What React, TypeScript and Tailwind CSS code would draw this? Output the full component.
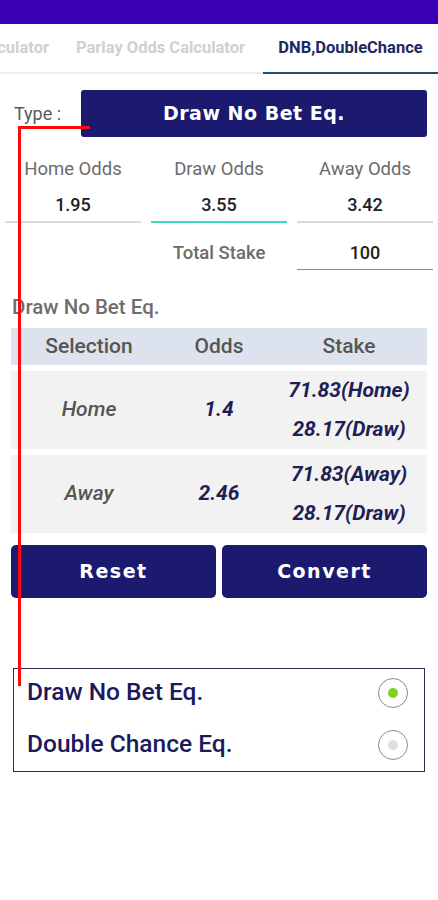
import React, { useState } from 'react';

const navy = 'bg-[#1b1a6e]';
const wide = { fontFamily: '"DejaVu Sans", Roboto, sans-serif' };

const OddsInput = ({ label, value, active = false }: { label: string; value: string; active?: boolean }) => (
  <div className="flex flex-col items-center w-[136px]">
    <span className="text-[18.5px] text-[#6b6b6b] leading-none mt-[1px]">{label}</span>
    <span className="text-[18px] font-medium text-[#222] leading-none mt-[17px]">{value}</span>
    <div className={`w-full mt-[7px] ${active ? 'h-[2px] bg-[#3dd6c0]' : 'h-[2px] bg-[#d9d9d9]'}`} />
  </div>
);

const Radio = ({ checked }: { checked: boolean }) => (
  <div className="w-[30px] h-[30px] rounded-full border-[1.5px] border-[#8a8a8a] flex items-center justify-center">
    <div className={`w-[10px] h-[10px] rounded-full ${checked ? 'bg-[#7ed321]' : 'bg-[#dedede]'}`} />
  </div>
);

export default function App() {
  const [mode, setMode] = useState<'dnb' | 'dc'>('dnb');

  const rows = [
    { sel: 'Home', odds: '1.4', a: '71.83(Home)', b: '28.17(Draw)' },
    { sel: 'Away', odds: '2.46', a: '71.83(Away)', b: '28.17(Draw)' },
  ];

  return (
    <div className="relative w-[438px] h-[900px] bg-white overflow-hidden" style={{ fontFamily: 'Roboto, "Noto Sans", sans-serif' }}>
      {/* status bar */}
      <div className="h-[24px] bg-[#3a00b5]" />

      {/* tabs, first one scrolled partly out of view */}
      <div className="h-[50px] flex items-stretch border-b-[2px] border-[#ececec] text-[16.5px] font-bold whitespace-nowrap">
        <div className="w-[58px] overflow-hidden flex items-center justify-end pr-[9px] text-[#d0d0d0]">
          <span>culator</span>
        </div>
        <div className="w-[205px] flex items-center justify-center text-[#d0d0d0]">Parlay Odds Calculator</div>
        <div className="flex-1 flex items-center justify-center text-[#1b2a5e] border-b-[2px] border-[#1f4f73] mb-[-2px]">
          DNB,DoubleChance
        </div>
      </div>

      {/* type row */}
      <div className="flex items-center mt-[16px] px-[11px]">
        <span className="w-[70px] pl-[3px] text-[18px] text-[#5a5a5a]">Type :</span>
        <div className={`flex-1 h-[47px] ${navy} rounded-[3px] flex items-center justify-center text-white text-[19px] font-bold tracking-[0.5px]`} style={wide}>
          Draw No Bet Eq.
        </div>
      </div>

      {/* odds */}
      <div className="flex justify-between px-[5px] mt-[22px]">
        <OddsInput label="Home Odds" value="1.95" />
        <OddsInput label="Draw Odds" value="3.55" active />
        <OddsInput label="Away Odds" value="3.42" />
      </div>

      {/* total stake */}
      <div className="flex items-center justify-end px-[5px] mt-[16px]">
        <span className="w-[136px] text-center text-[18.5px] text-[#6b6b6b] font-medium">Total Stake</span>
        <div className="w-[10px]" />
        <div className="w-[136px] flex flex-col items-center">
          <span className="text-[18px] font-medium text-[#222] leading-none mt-[5px]">100</span>
          <div className="w-full h-[1.5px] bg-[#8d8d8d] mt-[7px]" />
        </div>
      </div>

      <div className="px-[12px] mt-[22px] text-[20.5px] text-[#6e6e6e] font-medium">Draw No Bet Eq.</div>

      {/* table */}
      <div className="px-[11px] mt-[5px]">
        <div className="h-[37px] bg-[#dde3ee] flex items-center text-[21px] font-medium text-[#555]">
          <span className="w-[156px] text-center">Selection</span>
          <span className="w-[104px] text-center">Odds</span>
          <span className="flex-1 text-center">Stake</span>
        </div>
        {rows.map((r) => (
          <div key={r.sel} className="h-[78px] bg-[#f2f2f2] flex items-center mt-[6px] italic text-[21px]">
            <span className="w-[156px] text-center text-[#555] font-medium">{r.sel}</span>
            <span className="w-[104px] text-center text-[#1f1f55] font-bold">{r.odds}</span>
            <div className="flex-1 flex flex-col items-center text-[#1f1f55] font-bold leading-[39px]">
              <span>{r.a}</span>
              <span>{r.b}</span>
            </div>
          </div>
        ))}
      </div>

      {/* buttons */}
      <div className="flex gap-[6px] px-[11px] mt-[12px]">
        <button className={`flex-1 h-[53px] ${navy} rounded-[5px] text-white text-[19px] font-bold tracking-[1.5px]`} style={wide}>Reset</button>
        <button className={`flex-1 h-[53px] ${navy} rounded-[5px] text-white text-[19px] font-bold tracking-[1.5px]`} style={wide}>Convert</button>
      </div>

      {/* radio group */}
      <div className="mx-[13px] mt-[70px] border border-[#2b2b5a] pb-[2px] pl-[13px] pr-[16px]">
        <button onClick={() => setMode('dnb')} className="w-full h-[48px] flex items-center justify-between">
          <span className="text-[24.5px] font-medium text-[#1b1a5e]">Draw No Bet Eq.</span>
          <Radio checked={mode === 'dnb'} />
        </button>
        <button onClick={() => setMode('dc')} className="w-full h-[48px] mt-[4px] flex items-center justify-between">
          <span className="text-[24.5px] font-medium text-[#1b1a5e]">Double Chance Eq.</span>
          <Radio checked={mode === 'dc'} />
        </button>
      </div>

      {/* red annotation line */}
      <div className="absolute left-[18px] top-[126px] w-[72px] h-[3px] bg-[#ff0a0a]" />
      <div className="absolute left-[18px] top-[126px] w-[3px] h-[560px] bg-[#ff0a0a]" />
    </div>
  );
}
